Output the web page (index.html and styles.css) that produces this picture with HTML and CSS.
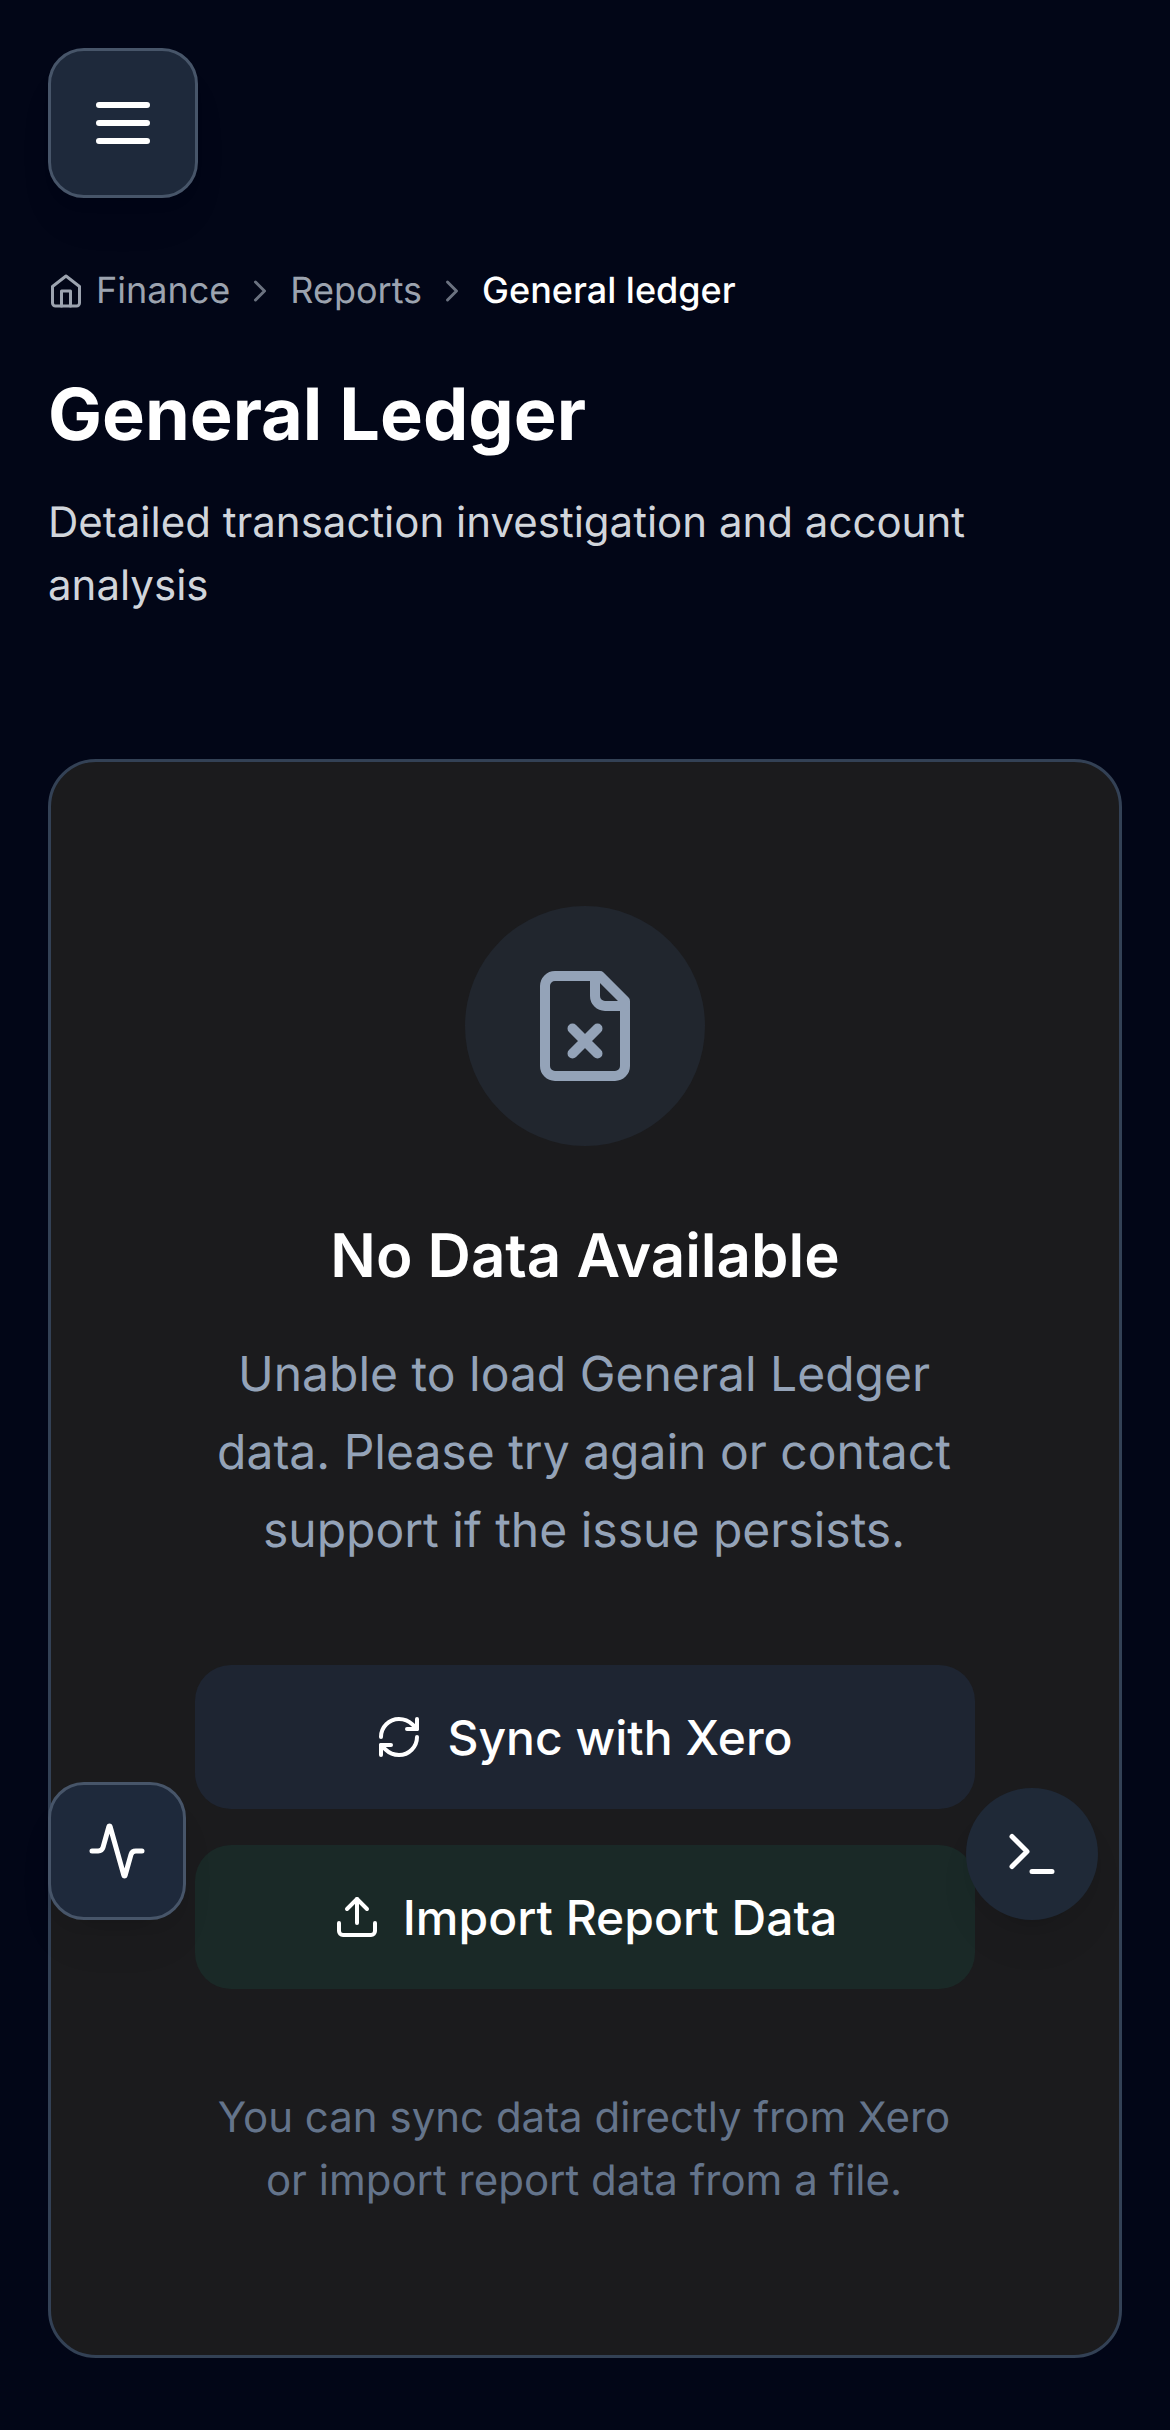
FILE: index.html
```html
<!DOCTYPE html>
<html lang="en">
<head>
<meta charset="utf-8">
<title>General Ledger</title>
<link rel="stylesheet" href="styles.css">
</head>
<body>
<button class="menu-button" aria-label="Open menu">
  <svg class="icon icon-lg" viewBox="0 0 24 24"><path d="M4 6h16M4 12h16M4 18h16"/></svg>
</button>
<nav class="breadcrumb" aria-label="Breadcrumb">
  <a class="crumb">
    <svg class="icon icon-sm" viewBox="0 0 24 24"><path d="m3 9 9-7 9 7v11a2 2 0 0 1-2 2H5a2 2 0 0 1-2-2z"/><path d="M9 22V12h6v10"/></svg>
    <span class="label">Finance</span>
  </a>
  <svg class="icon icon-sm separator" viewBox="0 0 24 24"><path d="m9 18 6-6-6-6"/></svg>
  <a class="crumb"><span class="label">Reports</span></a>
  <svg class="icon icon-sm separator" viewBox="0 0 24 24"><path d="m9 18 6-6-6-6"/></svg>
  <span class="crumb current"><span class="label">General ledger</span></span>
</nav>
<header class="page-header">
  <h1 class="page-title">General Ledger</h1>
  <p class="page-subtitle">Detailed transaction investigation and account analysis</p>
</header>
<main class="empty-card">
  <div class="empty-badge">
    <svg class="icon icon-xl" viewBox="0 0 24 24"><path d="M15 2H6a2 2 0 0 0-2 2v16a2 2 0 0 0 2 2h12a2 2 0 0 0 2-2V7z"/><path d="M14 2v4a2 2 0 0 0 2 2h4"/><path d="m14.5 12.5-5 5M9.5 12.5l5 5"/></svg>
  </div>
  <h2 class="empty-title">No Data Available</h2>
  <p class="empty-text">Unable to load General Ledger data. Please try again or contact support if the issue persists.</p>
  <div class="actions">
    <button class="action sync">
      <svg class="icon icon-base" viewBox="0 0 24 24"><path d="M3 12a9 9 0 0 1 9-9 9.75 9.75 0 0 1 6.74 2.74L21 8"/><path d="M21 3v5h-5"/><path d="M21 12a9 9 0 0 1-9 9 9.75 9.75 0 0 1-6.74-2.74L3 16"/><path d="M8 16H3v5"/></svg>
      <span>Sync with Xero</span>
    </button>
    <button class="action import">
      <svg class="icon icon-base" viewBox="0 0 24 24"><path d="M12 3v12"/><path d="m17 8-5-5-5 5"/><path d="M21 15v4a2 2 0 0 1-2 2H5a2 2 0 0 1-2-2v-4"/></svg>
      <span>Import Report Data</span>
    </button>
  </div>
  <p class="empty-hint">You can sync data directly from Xero or import report data from a file.</p>
</main>
<button class="floating activity" aria-label="Activity">
  <svg class="icon icon-md" viewBox="0 0 24 24"><path d="M22 12h-2.48a2 2 0 0 0-1.93 1.46l-2.35 8.36a.25.25 0 0 1-.48 0L9.24 2.18a.25.25 0 0 0-.48 0l-2.35 8.36A2 2 0 0 1 4.49 12H2"/></svg>
</button>
<button class="floating console" aria-label="Console">
  <svg class="icon icon-md" viewBox="0 0 24 24"><path d="m4 17 6-6-6-6M12 19h8"/></svg>
</button>
</body>
</html>
```
FILE: styles.css
```css
* {
  box-sizing: border-box;
  margin: 0;
  padding: 0;
}

body {
  position: relative;
  height: 2430px;
  padding: 48px;
  overflow: hidden;
  background: #020617;
  color: #fff;
  font-family: Inter, "Liberation Sans", sans-serif;
  text-rendering: geometricPrecision;
}

button {
  border: 0;
  color: inherit;
  font: inherit;
}

.icon {
  display: block;
  flex: none;
  fill: none;
  stroke: currentColor;
  stroke-width: 2;
  stroke-linecap: round;
  stroke-linejoin: round;
}

.icon-sm { width: 36px; height: 36px; }
.icon-base { width: 48px; height: 48px; }
.icon-md { width: 60px; height: 60px; }
.icon-lg { width: 72px; height: 72px; }
.icon-xl { width: 120px; height: 120px; }

.menu-button {
  display: flex;
  align-items: center;
  justify-content: center;
  width: 150px;
  height: 150px;
  border: 3px solid #475569;
  border-radius: 36px;
  background: #1e293b;
  box-shadow: 0 30px 45px -9px rgba(0, 0, 0, .06), 0 12px 18px -12px rgba(0, 0, 0, .1);
}

.breadcrumb {
  display: flex;
  align-items: center;
  gap: 12px;
  height: 48px;
  margin-top: 69px;
  color: #9ca3af;
  font-size: 36px;
  line-height: 46px;
}

.crumb {
  display: flex;
  align-items: center;
  gap: 12px;
}

.label { padding-bottom: 2px; }

.separator { color: #6b7280; }

.current {
  color: #fff;
  font-weight: 500;
}

.page-header { margin-top: 60px; }

.page-title {
  font-size: 72px;
  font-weight: 700;
  line-height: 80px;
}

.page-subtitle {
  margin-top: 36px;
  color: #d1d5db;
  font-size: 42px;
  line-height: 63px;
}

.empty-card {
  display: flex;
  flex-direction: column;
  align-items: center;
  height: 1599px;
  margin-top: 142px;
  padding: 144px 144px 0;
  border: 3px solid #334155;
  border-radius: 48px;
  background: #1b1b1d;
  text-align: center;
}

.empty-badge {
  display: flex;
  flex: none;
  align-items: center;
  justify-content: center;
  width: 240px;
  height: 240px;
  border-radius: 50%;
  background: #21262e;
  color: #94a3b8;
}

.empty-title {
  margin-top: 72px;
  font-size: 60px;
  font-weight: 600;
  line-height: 76px;
}

.empty-text {
  margin-top: 41px;
  padding-right: 2px;
  color: #94a3b8;
  font-size: 48px;
  line-height: 78px;
}

.actions {
  display: flex;
  flex-direction: column;
  gap: 36px;
  width: 100%;
  margin-top: 96px;
}

.action {
  display: flex;
  align-items: center;
  justify-content: center;
  gap: 24px;
  height: 144px;
  border-radius: 36px;
  font-size: 48px;
  font-weight: 500;
}

.sync {
  padding-right: 2px;
  background: #1e2532;
}

.import {
  gap: 22px;
  background: #1a2927;
}

.empty-hint {
  margin-top: 97px;
  padding-right: 2px;
  color: #64748b;
  font-size: 42px;
  line-height: 63px;
}

.floating {
  position: absolute;
  display: flex;
  align-items: center;
  justify-content: center;
  background: #1e293b;
  box-shadow: 0 30px 45px -9px rgba(0, 0, 0, .06), 0 12px 18px -12px rgba(0, 0, 0, .1);
}

.activity {
  left: 48px;
  top: 1782px;
  width: 138px;
  height: 138px;
  border: 3px solid #475569;
  border-radius: 36px;
}

.console {
  left: 966px;
  top: 1788px;
  width: 132px;
  height: 132px;
  border-radius: 50%;
  background: #1f2937;
}
```
